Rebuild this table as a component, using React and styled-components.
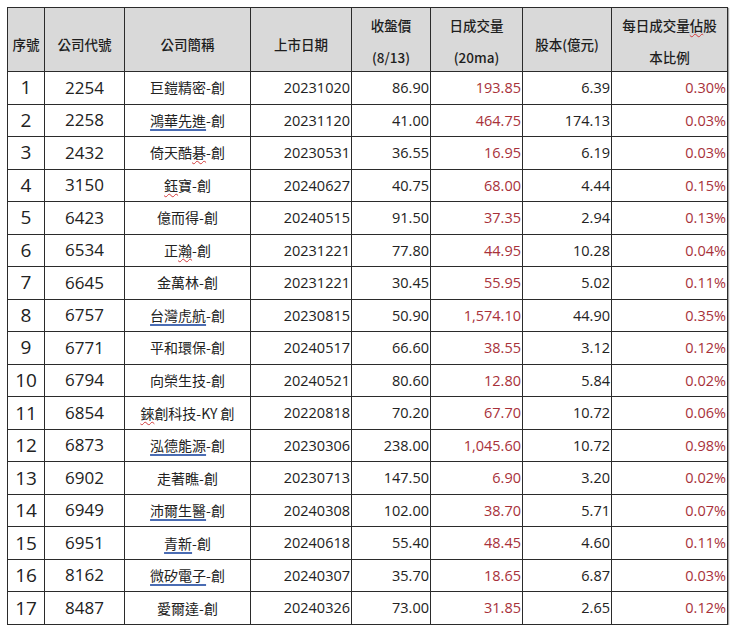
import React from "react";
import styled, { createGlobalStyle } from "styled-components";

const GlobalStyle = createGlobalStyle`
  html, body {
    margin: 0;
    padding: 0;
    background: #fff;
  }
  body {
    font-family: "Open Sans", "Noto Sans CJK TC", sans-serif;
    color: #222;
  }
`;

const Wrap = styled.div`
  padding: 7px 0 0 7px;
`;

const Table = styled.table`
  border-collapse: collapse;
  table-layout: fixed;
  width: 720px;
  box-shadow: 1px 1px 1px rgba(0, 0, 0, 0.35);
`;

const HeadRow = styled.tr`
  height: 63px;
`;

const HeadCell = styled.th`
  background: #d9d9d9;
  border: 1px solid #2b2b2b;
  padding: ${(p) => (p.$twoLine ? "4px 0 0" : "10px 0 0")};
  vertical-align: ${(p) => (p.$twoLine ? "top" : "middle")};
  font-family: "Noto Sans CJK TC", "Open Sans", sans-serif;
  font-weight: 500;
  font-size: 13.5px;
  line-height: 27px;
  color: #1e1e1e;
  text-align: center;
`;

const Line = styled.div`
  white-space: nowrap;
  & + & {
    margin-top: 5px;
  }
`;

const Row = styled.tr`
  height: 32.53px;
`;

const Cell = styled.td`
  border: 1px solid #2b2b2b;
  padding: ${(p) => (p.$align === "right" ? "0 1px 0 0" : "0")};
  text-align: ${(p) => p.$align || "right"};
  font-size: ${(p) => p.$size || 14.5}px;
  color: ${(p) => (p.$red ? "#a8313a" : "#222")};
  font-family: ${(p) =>
    p.$cjk
      ? '"Noto Sans CJK TC", "Open Sans", sans-serif'
      : '"Open Sans", "Noto Sans CJK TC", sans-serif'};
  white-space: nowrap;
  vertical-align: middle;
  line-height: 1.2;
`;

const Blue = styled.span`
  text-decoration: underline;
  text-decoration-color: #4a6cb3;
  text-decoration-thickness: 1.5px;
  text-underline-offset: 3px;
`;

const Wavy = styled.span`
  text-decoration: underline wavy;
  text-decoration-color: #d23a3a;
  text-decoration-thickness: 1px;
  text-underline-offset: 2px;
`;

const rows = [
  ["2254", [["巨鎧精密-創"]], "20231020", "86.90", "193.85", "6.39", "0.30%"],
  ["2258", [["鴻華先進", "b"], ["-創"]], "20231120", "41.00", "464.75", "174.13", "0.03%"],
  ["2432", [["倚天酷"], ["碁", "w"], ["-創"]], "20230531", "36.55", "16.95", "6.19", "0.03%"],
  ["3150", [["鈺", "w"], ["寶-創"]], "20240627", "40.75", "68.00", "4.44", "0.15%"],
  ["6423", [["億而得-創"]], "20240515", "91.50", "37.35", "2.94", "0.13%"],
  ["6534", [["正"], ["瀚", "w"], ["-創"]], "20231221", "77.80", "44.95", "10.28", "0.04%"],
  ["6645", [["金萬林-創"]], "20231221", "30.45", "55.95", "5.02", "0.11%"],
  ["6757", [["台灣虎航", "b"], ["-創"]], "20230815", "50.90", "1,574.10", "44.90", "0.35%"],
  ["6771", [["平和環保-創"]], "20240517", "66.60", "38.55", "3.12", "0.12%"],
  ["6794", [["向榮生技-創"]], "20240521", "80.60", "12.80", "5.84", "0.02%"],
  ["6854", [["錸", "w"], ["創科技-KY 創"]], "20220818", "70.20", "67.70", "10.72", "0.06%"],
  ["6873", [["泓德能源", "b"], ["-創"]], "20230306", "238.00", "1,045.60", "10.72", "0.98%"],
  ["6902", [["走著瞧-創"]], "20230713", "147.50", "6.90", "3.20", "0.02%"],
  ["6949", [["沛爾生醫", "b"], ["-創"]], "20240308", "102.00", "38.70", "5.71", "0.07%"],
  ["6951", [["青新", "b"], ["-創"]], "20240618", "55.40", "48.45", "4.60", "0.11%"],
  ["8162", [["微矽電子", "b"], ["-創"]], "20240307", "35.70", "18.65", "6.87", "0.03%"],
  ["8487", [["愛爾達-創"]], "20240326", "73.00", "31.85", "2.65", "0.12%"],
];

const widths = [37, 80, 126, 101, 79, 92, 89, 116];

const Name = ({ parts }) =>
  parts.map(([text, mark], i) =>
    mark === "b" ? (
      <Blue key={i}>{text}</Blue>
    ) : mark === "w" ? (
      <Wavy key={i}>{text}</Wavy>
    ) : (
      <span key={i}>{text}</span>
    )
  );

export default function App() {
  return (
    <Wrap>
      <GlobalStyle />
      <Table>
        <colgroup>
          {widths.map((w, i) => (
            <col key={i} style={{ width: w }} />
          ))}
        </colgroup>
        <thead>
          <HeadRow>
            <HeadCell>序號</HeadCell>
            <HeadCell>公司代號</HeadCell>
            <HeadCell>公司簡稱</HeadCell>
            <HeadCell>上市日期</HeadCell>
            <HeadCell $twoLine>
              <Line>收盤價</Line>
              <Line>(8/13)</Line>
            </HeadCell>
            <HeadCell $twoLine>
              <Line>日成交量</Line>
              <Line>(20ma)</Line>
            </HeadCell>
            <HeadCell>股本(億元)</HeadCell>
            <HeadCell $twoLine>
              <Line>
                每日成交量<Wavy>佔</Wavy>股
              </Line>
              <Line>本比例</Line>
            </HeadCell>
          </HeadRow>
        </thead>
        <tbody>
          {rows.map(([code, name, date, price, vol, cap, ratio], i) => (
            <Row key={code}>
              <Cell $align="center" $size={19}>
                {i + 1}
              </Cell>
              <Cell $align="center" $size={17}>
                {code}
              </Cell>
              <Cell $align="center" $cjk $size={14}>
                <Name parts={name} />
              </Cell>
              <Cell $align="right">{date}</Cell>
              <Cell $align="right">{price}</Cell>
              <Cell $align="right" $red>
                {vol}
              </Cell>
              <Cell $align="right">{cap}</Cell>
              <Cell $align="right" $red>
                {ratio}
              </Cell>
            </Row>
          ))}
        </tbody>
      </Table>
    </Wrap>
  );
}
